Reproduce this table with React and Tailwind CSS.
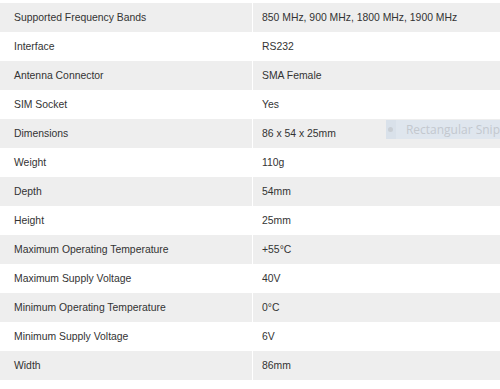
import React from "react";

const specs = [
  ["Supported Frequency Bands", "850 MHz, 900 MHz, 1800 MHz, 1900 MHz"],
  ["Interface", "RS232"],
  ["Antenna Connector", "SMA Female"],
  ["SIM Socket", "Yes"],
  ["Dimensions", "86 x 54 x 25mm"],
  ["Weight", "110g"],
  ["Depth", "54mm"],
  ["Height", "25mm"],
  ["Maximum Operating Temperature", "+55°C"],
  ["Maximum Supply Voltage", "40V"],
  ["Minimum Operating Temperature", "0°C"],
  ["Minimum Supply Voltage", "6V"],
  ["Width", "86mm"],
];

function App() {
  return (
    <div className="relative w-[500px] h-[389px] bg-white pt-[3px] overflow-hidden font-['Liberation_Sans',Arial,sans-serif] text-[10.4px] text-[#333333]">
      <div className="flex flex-col">
        {specs.map(([label, value], i) => (
          <div
            key={label}
            className={`flex h-[29px] items-center ${
              i % 2 === 0 ? "bg-[#eeeeee]" : "bg-white"
            }`}
          >
            <div className="w-[253px] h-full flex items-center pl-[14px] border-r border-white">
              {label}
            </div>
            <div className="flex-1 h-full flex items-center pl-[9px]">{value}</div>
          </div>
        ))}
      </div>

      {/* snipping tool tooltip */}
      <div className="absolute left-[386px] top-[120px] w-[114px] h-[19px] flex items-center bg-[#dfe6ee]">
        <div className="w-[20px] h-full flex items-center justify-center bg-[#d9e1ea]">
          <span className="w-[5px] h-[5px] rounded-full bg-[#c9ced4]"></span>
        </div>
        <span className="ml-[10px] whitespace-nowrap font-['Open_Sans',sans-serif] text-[12px] text-[#c3c8ce]">
          Rectangular Snip
        </span>
      </div>
    </div>
  );
}

export default App;
